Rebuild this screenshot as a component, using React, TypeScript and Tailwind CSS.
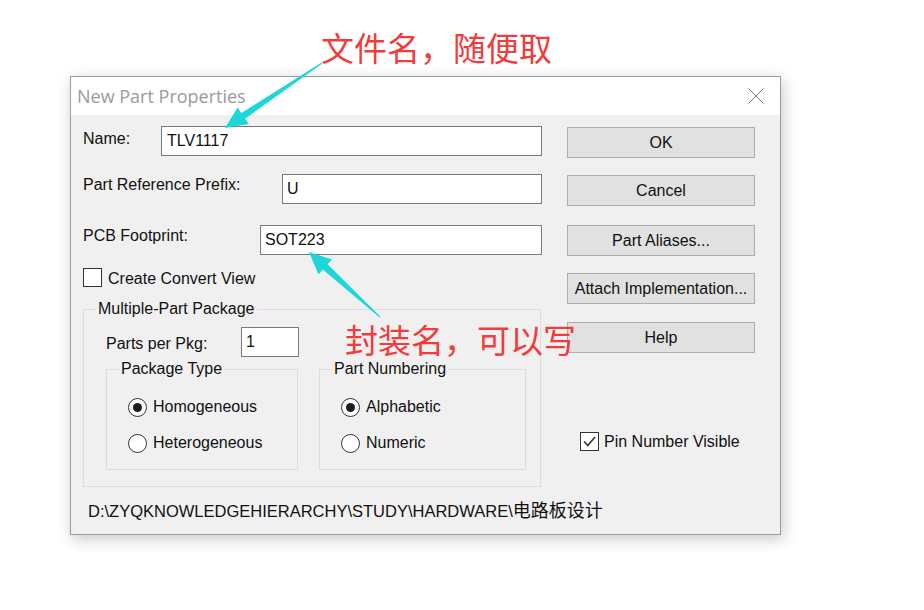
import React from "react";

const Radio = ({ checked, label }: { checked?: boolean; label: string }) => (
  <div className="flex items-center h-[20px]">
    <span className="w-[19px] h-[19px] rounded-full border border-[#333333] bg-white flex items-center justify-center shrink-0">
      {checked ? <span className="w-[9px] h-[9px] rounded-full bg-[#1e1e1e]" /> : null}
    </span>
    <span className="ml-[6px] leading-[18px]">{label}</span>
  </div>
);

const Btn = ({ label, cls }: { label: string; cls: string }) => (
  <div
    className={`h-[31px] w-[188px] border border-[#adadad] bg-[#e1e1e1] flex items-center justify-center leading-[18px] ${cls}`}
  >
    {label}
  </div>
);

export default function App() {
  return (
    <div className="relative w-[924px] h-[610px] bg-white overflow-hidden font-['Liberation_Sans',Arial,sans-serif] text-[16px] text-[#111]">
      <div className="pt-[76px] pl-[70px]">
        <div className="w-[711px] h-[459px] border border-[#9b9b9b] bg-[#f0f0f0] shadow-[2px_4px_14px_rgba(0,0,0,0.22)] flex flex-col">
          {/* title bar */}
          <div className="h-[38px] bg-white flex items-center justify-between pl-[6px] pr-[16px] shrink-0">
            <span className="font-['Open_Sans',sans-serif] text-[18px] text-[#9a9a9a] leading-[24px]">
              New Part Properties
            </span>
            <svg width="16" height="16" viewBox="0 0 16 16">
              <line x1="0.5" y1="0.5" x2="15.5" y2="15.5" stroke="#7a7a7a" strokeWidth="1" />
              <line x1="15.5" y1="0.5" x2="0.5" y2="15.5" stroke="#7a7a7a" strokeWidth="1" />
            </svg>
          </div>
          {/* body */}
          <div className="flex pl-[12px]">
            {/* left column */}
            <div className="w-[459px] pt-[11px] flex flex-col">
              <div className="flex h-[30px]">
                <span className="w-[78px] pt-[4px] leading-[18px]">Name:</span>
                <div className="flex-1 h-[30px] border border-[#7a7a7a] bg-white pl-[5px] flex items-center leading-[18px]">
                  TLV1117
                </div>
              </div>
              <div className="flex h-[30px] mt-[18px]">
                <span className="w-[199px] pt-[2px] leading-[18px]">Part Reference Prefix:</span>
                <div className="flex-1 h-[30px] border border-[#7a7a7a] bg-white pl-[4px] flex items-center leading-[18px]">
                  U
                </div>
              </div>
              <div className="flex h-[30px] mt-[21px]">
                <span className="w-[177px] pt-[2px] leading-[18px]">PCB Footprint:</span>
                <div className="flex-1 h-[30px] border border-[#7a7a7a] bg-white pl-[4px] flex items-center leading-[18px]">
                  SOT223
                </div>
              </div>
              <div className="flex items-start h-[19px] mt-[13px]">
                <span className="w-[19px] h-[19px] border border-[#333333] bg-white shrink-0" />
                <span className="ml-[6px] pt-[2px] leading-[18px]">Create Convert View</span>
              </div>
              <fieldset className="mt-[13px] w-[458px] border border-[#dcdcdc] pb-[16px]">
                <legend className="ml-[12px] px-[2px] leading-[18px]">Multiple-Part Package</legend>
                <div className="flex h-[30px] mt-[9px]">
                  <span className="w-[157px] pl-[22px] pt-[8px] leading-[18px]">Parts per Pkg:</span>
                  <div className="w-[58px] h-[30px] border border-[#7a7a7a] bg-white pl-[4px] flex items-center leading-[18px]">
                    1
                  </div>
                </div>
                <div className="flex mt-[3px] pl-[22px] gap-[21px]">
                  <fieldset className="w-[192px] h-[110px] border border-[#dcdcdc]">
                    <legend className="ml-[12px] px-[2px] leading-[18px]">Package Type</legend>
                    <div className="pl-[21px] pt-[19px] flex flex-col gap-[16px]">
                      <Radio checked label="Homogeneous" />
                      <Radio label="Heterogeneous" />
                    </div>
                  </fieldset>
                  <fieldset className="w-[207px] h-[110px] border border-[#dcdcdc]">
                    <legend className="ml-[12px] px-[2px] leading-[18px]">Part Numbering</legend>
                    <div className="pl-[21px] pt-[19px] flex flex-col gap-[16px]">
                      <Radio checked label="Alphabetic" />
                      <Radio label="Numeric" />
                    </div>
                  </fieldset>
                </div>
              </fieldset>
              <div className="mt-[13px] pl-[5px] text-[16.5px] leading-[18px] whitespace-nowrap">
                D:\ZYQKNOWLEDGEHIERARCHY\STUDY\HARDWARE\
                <span className="font-['Noto_Sans_CJK_SC',sans-serif] text-[18px]">电路板设计</span>
              </div>
            </div>
            {/* right column */}
            <div className="ml-[25px] pt-[12px] flex flex-col">
              <Btn label="OK" cls="" />
              <Btn label="Cancel" cls="mt-[17px]" />
              <Btn label="Part Aliases..." cls="mt-[19px]" />
              <Btn label="Attach Implementation..." cls="mt-[17px]" />
              <Btn label="Help" cls="mt-[18px]" />
              <div className="flex items-start mt-[79px] ml-[13px]">
                <span className="w-[19px] h-[19px] border border-[#333333] bg-white shrink-0 flex items-center justify-center">
                  <svg width="15" height="15" viewBox="0 0 15 15">
                    <path d="M2 7.5 L5.8 11.5 L13 3" fill="none" stroke="#333" strokeWidth="1.6" />
                  </svg>
                </span>
                <span className="ml-[5px] pt-[1px] leading-[18px]">Pin Number Visible</span>
              </div>
            </div>
          </div>
        </div>
      </div>

      {/* annotations overlay */}
      <svg className="absolute left-0 top-0 pointer-events-none" width="924" height="610" viewBox="0 0 924 610">
        <polygon
          points="321.7,62.6 241.3,112.9 237.6,107.5 225,128 248.8,124.1 245.1,118.7 322.3,63.4"
          fill="#1cd6da"
        />
        <polygon
          points="380.3,316.6 327.6,264.3 331.9,259.5 309,252 318.5,274.3 322.8,269.5 379.7,317.4"
          fill="#1cd6da"
        />
      </svg>
      <div className="absolute left-[321px] top-[33px] font-['Noto_Sans_CJK_SC',sans-serif] text-[33px] leading-[29px] text-[#f23b3b] whitespace-nowrap pointer-events-none">
        文件名，随便取
      </div>
      <div className="absolute left-[345px] top-[325px] font-['Noto_Sans_CJK_SC',sans-serif] text-[33px] leading-[29px] text-[#f23b3b] whitespace-nowrap pointer-events-none">
        封装名，可以写
      </div>
    </div>
  );
}
